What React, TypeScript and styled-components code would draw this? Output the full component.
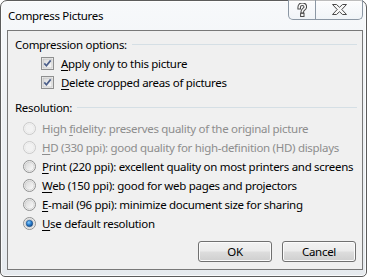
import React from "react";
import styled, { createGlobalStyle } from "styled-components";

const Global = createGlobalStyle`
  html, body { margin: 0; padding: 0; background: #ffffff; }
  body { font-family: "Segoe UI", "Noto Sans", "Open Sans", sans-serif; font-size: 11.5px; letter-spacing: -0.3px; color: #000; }
  * { box-sizing: border-box; }
  svg { flex-shrink: 0; display: block; }
`;

const Frame = styled.div`
  width: 367px;
  height: 277px;
  border: 1px solid #5c5c5c;
  border-radius: 7px 7px 5px 5px;
  background: linear-gradient(180deg, #f7f9fb 0%, #eef1f4 40%, #e6eaee 100%);
  box-shadow: inset 0 0 0 1px rgba(255, 255, 255, 0.8);
  padding: 0 3px 6px 6px;
  display: flex;
  flex-direction: column;
`;

const TitleBar = styled.div`
  height: 29px;
  display: flex;
  align-items: flex-start;
`;

const Title = styled.div`
  padding: 7px 0 0 1px;
  line-height: 16px;
  color: #000;
`;

const CaptionGroup = styled.div`
  margin-left: auto;
  margin-top: -1px;
  height: 20px;
  display: flex;
  border: 1px solid #8b97a4;
  border-top: none;
  border-radius: 0 0 5px 5px;
  background: linear-gradient(180deg, rgba(255,255,255,0.6), rgba(235,240,245,0.5));
  overflow: hidden;
`;

const CaptionButton = styled.div<{ $w: number; $divider?: boolean }>`
  width: ${(p) => p.$w}px;
  height: 100%;
  display: flex;
  align-items: center;
  justify-content: center;
  border-right: ${(p) => (p.$divider ? "1px solid #8b97a4" : "none")};
`;

const Client = styled.div`
  flex: 1;
  border: 1px solid #787878;
  background: #f0f0f0;
  padding: 4px 5px 7px 7px;
  display: flex;
  flex-direction: column;
`;

const GroupHeader = styled.div<{ $mt?: number }>`
  height: 19px;
  margin-top: ${(p) => p.$mt ?? 0}px;
  display: flex;
  align-items: center;
  gap: 5px;
  white-space: nowrap;
`;

const GroupLine = styled.div`
  flex: 1;
  height: 1px;
  background: #d5dfe5;
`;

const OptionList = styled.div<{ $mt?: number }>`
  display: flex;
  flex-direction: column;
  margin-top: ${(p) => p.$mt ?? 0}px;
`;

const OptionRow = styled.div<{ $indent: number; $gap: number; $disabled?: boolean }>`
  height: 19px;
  display: flex;
  align-items: center;
  padding-left: ${(p) => p.$indent}px;
  gap: ${(p) => p.$gap}px;
  color: ${(p) => (p.$disabled ? "#8d8d8d" : "#000")};
  white-space: nowrap;
`;

const Key = styled.span`
  text-decoration: underline;
  text-underline-offset: 2px;
`;

const ButtonRow = styled.div`
  margin-top: auto;
  display: flex;
  justify-content: flex-end;
  gap: 10px;
  padding-right: 1px;
`;

const Button = styled.div`
  width: 74px;
  height: 21px;
  border: 1px solid #707070;
  border-radius: 3px;
  background: linear-gradient(180deg, #f2f2f2 0%, #ebebeb 48%, #dddddd 52%, #cfcfcf 100%);
  box-shadow: inset 0 0 0 1px #fbfbfb;
  display: flex;
  align-items: center;
  justify-content: center;
  color: #000;
`;

const HelpGlyph = () => (
  <svg width="10" height="14" viewBox="0 0 10 14">
    <path d="M2.2 4.6 C2.2 2.3 3.6 1.2 5.2 1.2 C7.2 1.2 8.3 2.5 8.3 4 C8.3 6.2 5.3 6.3 5.3 8.8" fill="none" stroke="#4a4a4a" strokeWidth="3.6" strokeLinecap="square" />
    <path d="M2.2 4.6 C2.2 2.3 3.6 1.2 5.2 1.2 C7.2 1.2 8.3 2.5 8.3 4 C8.3 6.2 5.3 6.3 5.3 8.8" fill="none" stroke="#f7f7f7" strokeWidth="1.6" strokeLinecap="square" />
    <rect x="3.6" y="10.3" width="3.4" height="3.2" fill="#f7f7f7" stroke="#4a4a4a" strokeWidth="1" />
  </svg>
);

const CloseGlyph = () => (
  <svg width="15" height="11" viewBox="0 0 15 11">
    <polygon
      points="0.5,0.5 4.5,0.5 7.5,3.3 10.5,0.5 14.5,0.5 9.8,5.5 14.5,10.5 10.5,10.5 7.5,7.7 4.5,10.5 0.5,10.5 5.2,5.5"
      fill="#f7f7f7"
      stroke="#4a4a4a"
      strokeWidth="1"
      strokeLinejoin="round"
    />
  </svg>
);

const CheckBox = () => (
  <svg width="13" height="13" viewBox="0 0 13 13">
    <defs>
      <linearGradient id="cbg" x1="0" y1="0" x2="1" y2="1">
        <stop offset="0" stopColor="#d8d8d8" />
        <stop offset="1" stopColor="#fbfbfb" />
      </linearGradient>
    </defs>
    <rect x="0.5" y="0.5" width="12" height="12" fill="#f4f4f4" stroke="#8e8f8f" />
    <rect x="2" y="2" width="9" height="9" fill="url(#cbg)" stroke="#b3b3b3" strokeWidth="0.6" />
    <path d="M3.3 6.4 L5.4 8.7 L9.7 3.4" fill="none" stroke="#4c5f8a" strokeWidth="1.7" />
  </svg>
);

const Radio = ({ checked, disabled }: { checked?: boolean; disabled?: boolean }) => (
  <svg width="13" height="13" viewBox="0 0 13 13">
    <defs>
      <linearGradient id="rbg" x1="0" y1="0" x2="1" y2="1">
        <stop offset="0" stopColor="#d6d6d6" />
        <stop offset="1" stopColor="#fdfdfd" />
      </linearGradient>
      <radialGradient id="rdot" cx="0.4" cy="0.35" r="0.7">
        <stop offset="0" stopColor="#8ad0ff" />
        <stop offset="0.5" stopColor="#2a7fd0" />
        <stop offset="1" stopColor="#0d3f7a" />
      </radialGradient>
    </defs>
    <circle cx="6.5" cy="6.5" r="6" fill={disabled ? "#f4f4f4" : "#f6f6f6"} stroke={disabled ? "#c9c9c9" : "#8e8f8f"} />
    <circle cx="6.5" cy="6.5" r="4.6" fill={disabled ? "#f2f2f2" : "url(#rbg)"} stroke={disabled ? "#e2e2e2" : "#bdbdbd"} strokeWidth="0.6" />
    {checked && <circle cx="6.5" cy="6.5" r="3.3" fill="url(#rdot)" stroke="#1b4a80" strokeWidth="0.5" />}
  </svg>
);

const radios: { key: string; rest: React.ReactNode; pre?: string; disabled?: boolean; checked?: boolean }[] = [
  { pre: "High ", key: "f", rest: "idelity: preserves quality of the original picture", disabled: true },
  { key: "H", rest: "D (330 ppi): good quality for high-definition (HD) displays", disabled: true },
  { key: "P", rest: "rint (220 ppi): excellent quality on most printers and screens" },
  { key: "W", rest: "eb (150 ppi): good for web pages and projectors" },
  { key: "E", rest: "-mail (96 ppi): minimize document size for sharing" },
  { key: "U", rest: "se default resolution", checked: true },
];

export default function App() {
  return (
    <>
      <Global />
      <Frame>
        <TitleBar>
          <Title>Compress Pictures</Title>
          <CaptionGroup>
            <CaptionButton $w={27} $divider>
              <HelpGlyph />
            </CaptionButton>
            <CaptionButton $w={46}>
              <CloseGlyph />
            </CaptionButton>
          </CaptionGroup>
        </TitleBar>
        <Client>
          <GroupHeader>
            <span>Compression options:</span>
            <GroupLine />
          </GroupHeader>
          <OptionList>
            <OptionRow $indent={26} $gap={7}>
              <CheckBox />
              <span>
                <Key>A</Key>pply only to this picture
              </span>
            </OptionRow>
            <OptionRow $indent={26} $gap={7}>
              <CheckBox />
              <span>
                <Key>D</Key>elete cropped areas of pictures
              </span>
            </OptionRow>
          </OptionList>
          <GroupHeader $mt={6}>
            <span>Resolution:</span>
            <GroupLine />
          </GroupHeader>
          <OptionList $mt={2}>
            {radios.map((r, i) => (
              <OptionRow key={i} $indent={8} $gap={6} $disabled={r.disabled}>
                <Radio checked={r.checked} disabled={r.disabled} />
                <span>
                  {r.pre}
                  <Key>{r.key}</Key>
                  {r.rest}
                </span>
              </OptionRow>
            ))}
          </OptionList>
          <ButtonRow>
            <Button>OK</Button>
            <Button>Cancel</Button>
          </ButtonRow>
        </Client>
      </Frame>
    </>
  );
}
